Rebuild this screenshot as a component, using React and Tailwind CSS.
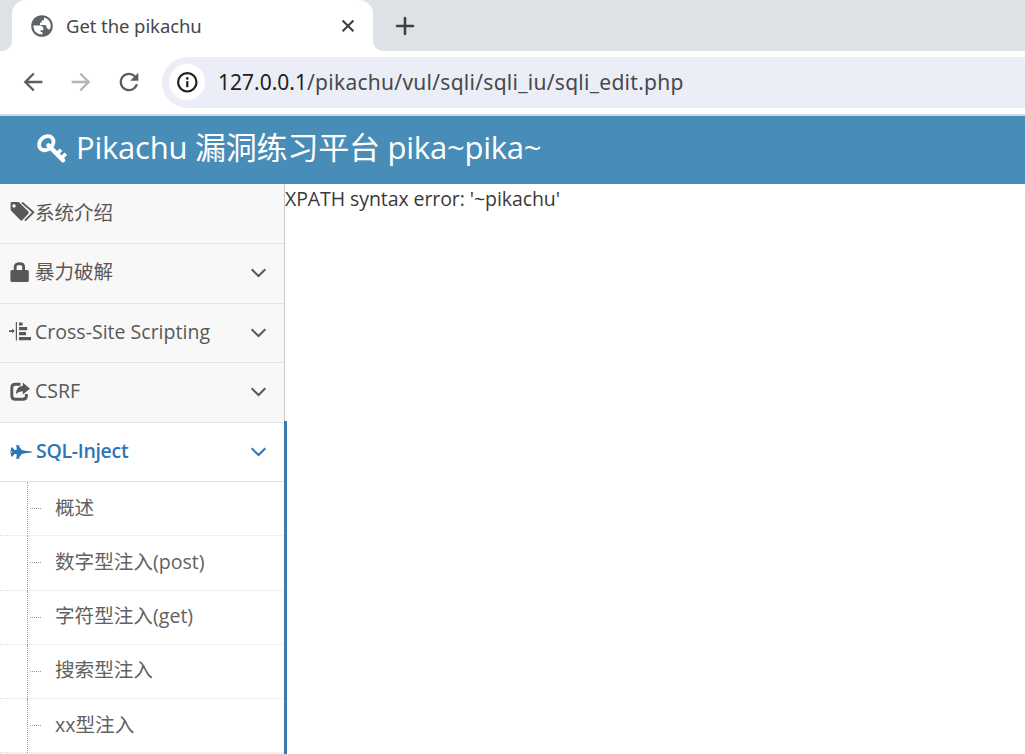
import React from "react";
import { MdArrowBack, MdArrowForward, MdRefresh } from "react-icons/md";

const pageFont = "font-['Open_Sans','Noto_Sans_CJK_SC',sans-serif]";

function GlobeIcon() {
  return (
    <svg className="size-[22px]" viewBox="0 0 22 22">
      <circle cx="11" cy="11" r="10.8" fill="#5f6368" />
      <path
        fill="#fff"
        d="M2.2 10.4 H8.6 Q12.4 10.6 12.4 14 V15.2 H9.6 V17 H11.4 V19.6 Q3 19.6 2.2 10.4 Z"
      />
      <path
        fill="#fff"
        d="M13 2.4 Q19 4 19.8 10.6 Q19.7 13 18.2 15 Q17.6 13.4 15.6 13.2 V11.6 Q15.4 10 13.4 10 H9 V7.6 H10.8 V5.2 H13 Z"
      />
    </svg>
  );
}

function CloseIcon() {
  return (
    <svg className="size-[20px]" viewBox="0 0 20 20" fill="none" stroke="#3c4043" strokeWidth="2.1">
      <path d="M4.6 4.4 L15.4 15.2 M15.4 4.4 L4.6 15.2" />
    </svg>
  );
}

function AddIcon() {
  return (
    <svg className="size-[28px]" viewBox="0 0 28 28" fill="none" stroke="#3c4043" strokeWidth="2.6" strokeLinecap="round">
      <path d="M6 14 H22 M14 6 V22" />
    </svg>
  );
}

function InfoIcon() {
  return (
    <svg className="size-[24px]" viewBox="0 0 24 24" fill="none" stroke="#1f1f1f">
      <circle cx="12.3" cy="12.3" r="9.2" strokeWidth="2.2" />
      <path d="M12.3 11.2 V17.2" strokeWidth="2.2" />
      <circle cx="12.3" cy="8.4" r="1.3" fill="#1f1f1f" stroke="none" />
    </svg>
  );
}

function KeyIcon() {
  return (
    <svg className="h-[32px] w-[32px] shrink-0" viewBox="0 0 32 32" fill="none" stroke="#fff">
      <ellipse cx="10.3" cy="9.2" rx="7.9" ry="6.3" strokeWidth="3.8" transform="rotate(-42 10.3 9.2)" />
      <circle cx="12.4" cy="11.4" r="2.1" fill="#fff" stroke="none" />
      <path d="M13 12 L27 26.2" strokeWidth="4.6" strokeLinecap="round" />
      <path d="M20.5 20.5 L25 15.8 M25 24.5 L29.8 19.8" strokeWidth="3.6" />
    </svg>
  );
}

function TagsIcon() {
  return (
    <svg className="h-[22px] w-[26px]" viewBox="0 0 26 22">
      <path
        fill="currentColor"
        fillRule="evenodd"
        d="M2 0 H8.8 Q9.9 0 10.6 .7 L19.3 9.4 Q20.5 10.6 19.3 11.8 L13.5 17.9 Q12.4 19 11.2 17.9 L2.6 9.3 Q1.6 8.3 1.6 7 V.5 Z M5 2.2 a1.7 1.7 0 1 0 .01 0 Z"
      />
      <path d="M13 .5 L24.4 10.2 L16 18.6" fill="none" stroke="currentColor" strokeWidth="1.8" />
    </svg>
  );
}

function LockIcon() {
  return (
    <svg className="h-[22px] w-[22px]" viewBox="0 0 22 22">
      <path d="M6.2 8 V4.5 Q6.2 1.6 10.4 1.6 Q14.6 1.6 14.6 4.5 V8" fill="none" stroke="currentColor" strokeWidth="2.8" />
      <rect x="1.4" y="8" width="18.4" height="12" rx="1.6" fill="currentColor" />
    </svg>
  );
}

function IndentIcon() {
  return (
    <svg className="h-[22px] w-[22px]" viewBox="0 0 22 22" fill="currentColor">
      <path d="M0 8.3h3.2V6.6L5.8 9.1 3.2 11.6V10H0z M6.8 0h1.2v18.5H6.8z M10 .5h3.6v3H10z M10 5h8.2v3.2H10z M10 10h7v3.2H10z M10 15h12v3.2H10z" />
    </svg>
  );
}

function ShareIcon() {
  return (
    <svg className="h-[22px] w-[22px]" viewBox="0 0 22 22">
      <path
        d="M11.5 3.2 H6.3 Q2.8 3.2 2.8 6.7 V14.8 Q2.8 18.3 6.3 18.3 H13.9 Q17.4 18.3 17.4 14.8 V13"
        fill="none"
        stroke="currentColor"
        strokeWidth="2.9"
      />
      <path d="M13.8 1.6 L21 7.7 L13.8 13.4 V10.2 Q9.8 10 7 13.1 Q7.3 5.2 13.8 5 Z" fill="currentColor" />
    </svg>
  );
}

function JetIcon() {
  return (
    <svg className="h-[16px] w-[23px]" viewBox="0 0 23 16" fill="currentColor">
      <path d="M2 3.4 H3.4 L5.6 6 H7.6 V2.2 H7 V1.2 H10.6 V2.2 H9.8 L12.8 6 L16 6.8 L22.8 7.6 V8.4 L16 9.2 L12.8 10 L9.8 13.8 H10.6 V14.8 H7 V13.8 H7.6 V10 H5.6 L3.4 12.6 H2 V9.6 H1 V8.6 H3.4 V7.4 H1 V6.4 H2 Z" />
    </svg>
  );
}

function Chevron() {
  return (
    <svg className="h-[10px] w-[16px]" viewBox="0 0 16 10" fill="none" stroke="currentColor" strokeWidth="2">
      <path d="M1.7 1.3 L8.5 8 L15.3 1.3" />
    </svg>
  );
}

const items = [
  { label: "系统介绍", icon: <TagsIcon />, row: "h-[60px] pb-[2px]", text: "", plain: true },
  { label: "暴力破解", icon: <LockIcon />, row: "h-[60px] pb-[2px]", text: "pb-[2px]" },
  { label: "Cross-Site Scripting", icon: <IndentIcon />, row: "h-[59px] pb-[1px]", text: "pb-[2px]" },
  { label: "CSRF", icon: <ShareIcon />, row: "h-[60px] pb-[2px]", text: "pb-[2px]" },
];

const children = [
  { label: "概述", height: "h-[54px]", text: "pb-[2px]" },
  { label: "数字型注入(post)", height: "h-[55px]", text: "pb-[3px]" },
  { label: "字符型注入(get)", height: "h-[54px]", text: "pb-[3px]" },
  { label: "搜索型注入", height: "h-[54px]", text: "pb-[3px]" },
  { label: "xx型注入", height: "h-[54px]", text: "pb-[2px]" },
];

function Browser() {
  return (
    <div className="h-[116px] shrink-0 border-b-2 border-[#d5dae6] bg-white font-['Noto_Sans','Open_Sans',sans-serif]">
      <div className="flex h-[51px] bg-white">
        <div className="w-3 shrink-0 rounded-br-[10px] bg-[#dee1e6]" />
        <div className="w-[361px] shrink-0 bg-[#dee1e6]">
          <div className="flex h-full items-center rounded-t-[14px] bg-white pl-[19px] pr-[15px]">
            <GlobeIcon />
            <span className="ml-[13px] whitespace-nowrap text-[18.5px] tracking-[-0.08px] text-[#45474a]">Get the pikachu</span>
            <span className="ml-auto">
              <CloseIcon />
            </span>
          </div>
        </div>
        <div className="flex grow items-center rounded-bl-[10px] bg-[#dee1e6] pl-[18px]">
          <AddIcon />
        </div>
      </div>
      <div className="flex h-[63px] items-center pb-px pl-[19px]">
        <MdArrowBack className="size-[28px] text-[#5a5c5f]" />
        <MdArrowForward className="ml-[20px] size-[28px] text-[#b4b5b7]" />
        <MdRefresh className="ml-[20px] size-[28px] text-[#5a5c5f]" />
        <div className="ml-[19px] flex h-[51px] grow items-center rounded-l-full bg-[#ebeef7] pl-[7px]">
          <div className="flex size-[36px] items-center justify-center rounded-full bg-white">
            <InfoIcon />
          </div>
          <span className="ml-[13px] whitespace-nowrap pt-[2px] text-[21px] text-[#47494d]">
            <span className="text-[#202124]">127.0.0.1</span>
            <span className="tracking-[0.27px]">/pikachu/vul/sqli/sqli_iu/sqli_edit.php</span>
          </span>
        </div>
      </div>
    </div>
  );
}

function MenuItem({ item }) {
  return (
    <a className={`flex shrink-0 items-center border-b border-[#e2e3e4] bg-[#f8f8f8] pl-[9px] pr-[18px] text-[#585858] ${item.row}`}>
      <span className="w-[26px] shrink-0">{item.icon}</span>
      <span className={`whitespace-nowrap text-[19.55px] leading-none ${item.text}`}>{item.label}</span>
      {!item.plain && (
        <span className="ml-auto">
          <Chevron />
        </span>
      )}
    </a>
  );
}

function SubMenu() {
  return (
    <div className="flex shrink-0">
      <ul className="w-[284px]">
        {children.map((c) => (
          <li key={c.label} className={`flex border-b border-dotted border-[#d8e1e9] ${c.height}`}>
            <span className="-mb-px ml-[27px] w-px shrink-0 border-l border-dotted border-[#8e9fb0]" />
            <span className="ml-[2px] mt-[26px] h-px w-[11px] shrink-0 border-t border-dotted border-[#8e9fb0]" />
            <span className={`ml-[14px] self-center whitespace-nowrap text-[19.6px] leading-none text-[#616161] ${c.text}`}>{c.label}</span>
          </li>
        ))}
        <li className="h-[2px] bg-[#f0f2f4]" />
      </ul>
    </div>
  );
}

export default function App() {
  return (
    <div className="flex h-[754px] w-[1025px] flex-col overflow-hidden bg-white">
      <Browser />
      <header className={`flex h-[68px] shrink-0 items-center bg-[#488db8] pl-[36px] text-white ${pageFont}`}>
        <KeyIcon />
        <h1 className="-mt-[5px] ml-[8px] whitespace-nowrap text-[31px] leading-none tracking-[-0.23px]">Pikachu 漏洞练习平台 pika~pika~</h1>
      </header>
      <div className={`flex min-h-0 grow ${pageFont}`}>
        <nav className="flex w-[287px] shrink-0 flex-col">
          <div className="flex w-[285px] flex-col border-r border-[#c9c9c9] bg-[#f8f8f8]">
            {items.map((item) => (
              <MenuItem key={item.label} item={item} />
            ))}
          </div>
          <div className="-mt-[2px] flex flex-col border-r-[3px] border-[#3a7ab0] pt-[2px]">
            <a className="flex h-[59px] shrink-0 items-center border-b border-[#dfe3e7] bg-white pb-px pl-[9px] pr-[18px] text-[#2e75b8]">
              <span className="w-[27px] shrink-0">
                <JetIcon />
              </span>
              <span className="whitespace-nowrap pb-px text-[19.5px] font-semibold leading-none tracking-[-0.3px]">SQL-Inject</span>
              <span className="ml-auto">
                <Chevron />
              </span>
            </a>
            <SubMenu />
          </div>
        </nav>
        <main className="-ml-[2px] pt-[1px]">
          <p className="whitespace-nowrap text-[19.5px] leading-[28px] tracking-[-0.08px] text-[#393939]">XPATH syntax error: '~pikachu'</p>
        </main>
      </div>
    </div>
  );
}
